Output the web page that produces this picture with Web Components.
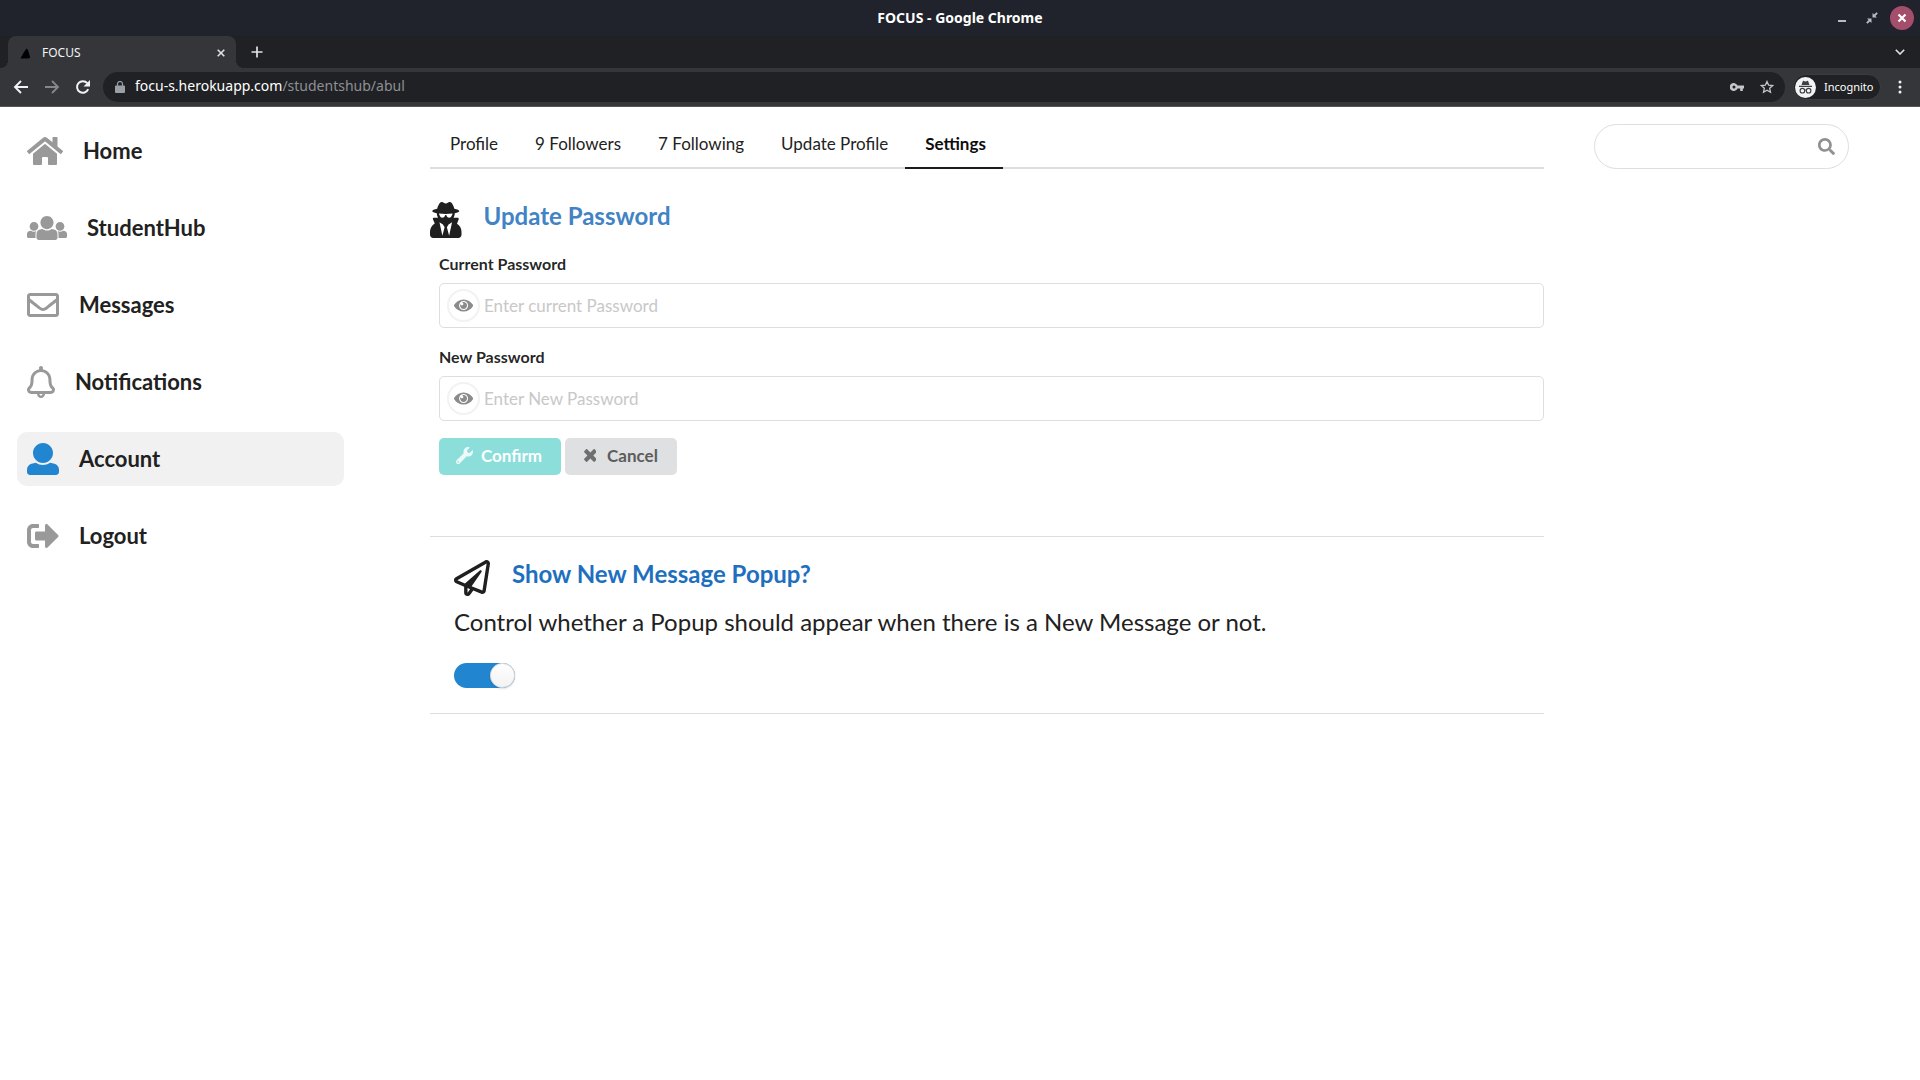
<!DOCTYPE html>
<html lang="en">
<head>
<meta charset="utf-8">
<title>FOCUS</title>
<style>
  html, body { margin: 0; min-height: 100%; background: #fff; }
  body { font-family: Lato, "Liberation Sans", sans-serif; font-size: 17px; line-height: 20px; color: rgba(0,0,0,.87); }
</style>
</head>
<body>
<focus-app></focus-app>

<template id="t-titlebar">
<style>
  :host { display: grid; grid-template-columns: 1fr auto 1fr; align-items: center; height: 36px; padding: 0 6px; background: #20232b; color: #fff; font: bold 14px/20px "Noto Sans", sans-serif; }
  .title { grid-column: 2; }
  .controls { display: flex; justify-content: flex-end; align-items: center; gap: 6px; }
  button { display: grid; place-items: center; width: 24px; height: 24px; padding: 0; border: 0; border-radius: 50%; background: none; color: #b9bbc0; }
  .close { background: #a54e6c; color: #fff; }
  svg { display: block; }
</style>
<span class="title">FOCUS - Google Chrome</span>
<div class="controls">
  <button aria-label="Minimize"><svg width="12" height="12" viewBox="0 0 12 12"><path d="M2 8h8v2H2z" fill="currentColor"/></svg></button>
  <button aria-label="Restore"><svg width="12" height="12" viewBox="0 0 12 12"><path d="M6.500 5.500V1l1.600 1.600L10.500.2l1.300 1.300-2.400 2.400L11 5.500zM5.500 6.500V11L3.900 9.400 1.500 11.800.2 10.500l2.400-2.400L1 6.500z" fill="currentColor"/></svg></button>
  <button class="close" aria-label="Close"><svg width="10" height="10" viewBox="0 0 10 10"><path d="M1.500 1.500l7 7M8.500 1.500l-7 7" stroke="currentColor" stroke-width="2.200"/></svg></button>
</div>
</template>

<template id="t-tabstrip">
<style>
  :host { display: flex; align-items: center; height: 32px; padding: 0 8px; background: #202124; font: 12px/20px "Noto Sans", sans-serif; color: #f1f3f4; }
  .tab { position: relative; display: flex; align-items: center; gap: 10px; box-sizing: border-box; width: 228px; height: 32px; padding: 1px 7px 0 12px; border-radius: 8px 8px 0 0; background: #35363a; }
  .tab::before, .tab::after { content: ""; position: absolute; bottom: 0; width: 8px; height: 8px; }
  .tab::before { right: 100%; background: radial-gradient(circle at 0 0, transparent 8px, #35363a 8px); }
  .tab::after { left: 100%; background: radial-gradient(circle at 100% 0, transparent 8px, #35363a 8px); }
  .name { flex: 1; }
  button { display: grid; place-items: center; width: 16px; height: 16px; padding: 0; border: 0; background: none; color: #dfe1e5; }
  .new { margin-left: 13px; }
  .list { margin-left: auto; margin-right: 4px; }
  svg { display: block; }
</style>
<div class="tab">
  <svg width="12" height="12" viewBox="0 0 12 12"><path d="M.5 11.500Q3 6 6.500 1.500l1.500 1.500 2.200 7.500-1.700 1z" fill="#000"/></svg>
  <span class="name">FOCUS</span>
  <button aria-label="Close tab"><svg width="8" height="8" viewBox="0 0 8 8"><path d="M.7.7l6.600 6.600M7.300.7L.7 7.300" stroke="currentColor" stroke-width="1.600"/></svg></button>
</div>
<button class="new" aria-label="New tab"><svg width="12" height="12" viewBox="0 0 12 12"><path d="M6 .5v11M.5 6h11" stroke="currentColor" stroke-width="1.700"/></svg></button>
<button class="list" aria-label="Search tabs"><svg width="10" height="6" viewBox="0 0 10 6"><path d="M.8.8L5 5 9.200.8" fill="none" stroke="currentColor" stroke-width="1.600"/></svg></button>
</template>

<template id="t-toolbar">
<style>
  :host { display: flex; align-items: center; box-sizing: border-box; height: 39px; padding: 0 12px 0 13px; background: #35363a; border-bottom: 1px solid #55565a; font: 14px/20px "Noto Sans", sans-serif; color: #fff; }
  button { display: grid; place-items: center; width: 16px; height: 16px; padding: 0; border: 0; background: none; color: #f1f3f4; }
  .nav { display: flex; gap: 15px; }
  .back { color: #f1f3f4; } .forward { color: #85868a; }
  .omnibox { display: flex; flex: 1; align-items: center; height: 30px; margin: 0 8px 0 12px; padding: 0 10px 0 12px; border-radius: 15px; background: #202124; }
  .url { flex: 1; margin-left: 10px; padding-bottom: 2px; }
  .path { color: #8d9094; }
  .tools { display: flex; gap: 14px; color: #c4c6ca; }
  .tools button { color: inherit; }
  .incognito { display: flex; align-items: center; gap: 8px; box-sizing: border-box; width: 88px; height: 26px; padding: 0 2px 0 1px; border: 1px solid #3c3d41; border-radius: 13px; background: #202124; font: 11px/20px "Noto Sans", sans-serif; }
  .menu { margin-left: 11px; }
  svg { display: block; }
</style>
<div class="nav">
  <button class="back" aria-label="Back"><svg width="16" height="16" viewBox="0 0 16 16"><path d="M15 8H2.500M8 2L2 8l6 6" fill="none" stroke="currentColor" stroke-width="1.900"/></svg></button>
  <button class="forward" aria-label="Forward"><svg width="16" height="16" viewBox="0 0 16 16"><path d="M1 8h12.500M8 2l6 6-6 6" fill="none" stroke="currentColor" stroke-width="1.900"/></svg></button>
  <button aria-label="Reload"><svg width="16" height="16" viewBox="0 0 16 16"><path d="M13.200 10.200A5.800 5.800 0 1 1 12.300 4.200" fill="none" stroke="currentColor" stroke-width="2"/><path d="M15 1v6.500H8.500z" fill="currentColor"/></svg></button>
</div>
<div class="omnibox">
  <svg width="10" height="12" viewBox="0 0 10 12"><path d="M1 4.500h8a1 1 0 0 1 1 1V11a1 1 0 0 1-1 1H1a1 1 0 0 1-1-1V5.500a1 1 0 0 1 1-1z" fill="#9aa0a6"/><path d="M2.500 5V3a2.500 2.500 0 0 1 5 0v2" fill="none" stroke="#9aa0a6" stroke-width="1.200"/></svg>
  <span class="url">focu-s.herokuapp.com<span class="path">/studentshub/abul</span></span>
  <div class="tools">
    <button aria-label="Passwords"><svg width="14" height="8" viewBox="0 0 14 8"><path fill-rule="evenodd" d="M7.500 2.600H14v2.800h-1.200V8h-2.600V5.400H7.500A4 4 0 1 1 7.500 2.600zM4 2.500a1.500 1.500 0 1 0 0 3 1.500 1.500 0 0 0 0-3z" fill="currentColor"/></svg></button>
    <button aria-label="Bookmark"><svg width="14" height="14" viewBox="0 0 14 14"><path d="M7 1.500l1.650 3.700 4 .4-3 2.700.85 3.950L7 10.200l-3.500 2.050.85-3.950-3-2.700 4-.4z" fill="none" stroke="currentColor" stroke-width="1.300"/></svg></button>
  </div>
</div>
<div class="incognito">
  <svg width="21" height="21" viewBox="0 0 21 21"><circle cx="10.500" cy="10.500" r="10.500" fill="#f1f3f4"/><path d="M6.500 8l1.200-3.600c.2-.5.600-.6 1-.5l1.800.5 1.800-.5c.4-.1.800 0 1 .5L14.500 8zM4 8.800h13v1.100H4z" fill="#3c4043"/><circle cx="7.400" cy="13.700" r="2.300" fill="none" stroke="#3c4043" stroke-width="1.100"/><circle cx="13.600" cy="13.700" r="2.300" fill="none" stroke="#3c4043" stroke-width="1.100"/><path d="M9.500 13.300q1-.6 2 0" fill="none" stroke="#3c4043"/></svg>
  <span>Incognito</span>
</div>
<button class="menu" aria-label="Menu"><svg width="4" height="14" viewBox="0 0 4 14"><g fill="currentColor"><circle cx="2" cy="2" r="1.500"/><circle cx="2" cy="7" r="1.500"/><circle cx="2" cy="12" r="1.500"/></g></svg></button>
</template>

<template id="t-navitem">
<style>
  :host { display: block; }
  a { display: flex; align-items: center; gap: 20px; height: 54px; padding: 0 10px; border-radius: 10px; color: #212121; text-decoration: none; font-size: 22px; font-weight: 700; line-height: 28px; }
  ui-icon { --size: 32px; color: #999; }
  :host([active]) a { background: #f1f1f1; }
  :host([active]) ui-icon { color: #2185d0; }
</style>
<a href="#"><ui-icon></ui-icon><slot></slot></a>
</template>

<template id="t-tab">
<style>
  :host { display: block; }
  a { display: block; padding: 13px 17px 13px 20px; margin-bottom: -2px; border-bottom: 2px solid transparent; color: #222; text-decoration: none; line-height: 20px; }
  :host([active]) a { border-color: #1b1c1d; color: #0d0d0d; font-weight: 700; }
</style>
<a href="#"><slot></slot></a>
</template>

<template id="t-header">
<style>
  :host { display: block; }
  h2 { display: flex; align-items: flex-start; gap: 22px; margin: 0; height: 36px; font-size: 24px; font-weight: 700; line-height: 28px; color: var(--heading, #1e70bf); }
  ui-icon { --size: 36px; color: #1f1f1f; }
</style>
<h2><ui-icon></ui-icon><slot></slot></h2>
</template>

<template id="t-field">
<style>
  :host { display: block; }
  label { display: block; margin-bottom: 9px; font-size: 16px; font-weight: 700; line-height: 20px; }
  .box { display: flex; align-items: center; gap: 4px; box-sizing: border-box; height: 45px; padding: 0 7px; border: 1px solid #dedede; border-radius: 5px; }
  button { display: grid; place-items: center; box-sizing: border-box; width: 33px; height: 33px; padding: 0; border: 2px solid #f2f2f2; border-radius: 50%; background: #fff; color: #8b8b8b; }
  ui-icon { --size: 17px; }
  input { flex: 1; min-width: 0; padding: 0; border: 0; outline: 0; background: none; font: inherit; color: inherit; }
  input::placeholder { color: #c8c8c8; opacity: 1; }
</style>
<label for="field"></label>
<div class="box"><button type="button" aria-label="Show password"><ui-icon name="eye"></ui-icon></button><input id="field" type="password"></div>
</template>

<template id="t-button">
<style>
  :host { display: block; }
  button { display: flex; align-items: center; gap: 7px; height: 37px; padding: 0 19px 2px 15px; border: 0; border-radius: 5px; background: #dfe0e1; color: #5c5c5d; font: inherit; font-weight: 700; line-height: 20px; }
  .icon { display: grid; place-items: center; width: 20px; }
  ui-icon { --size: 17px; opacity: .85; }
  :host([kind=confirm]) button { background: #8bdeda; color: #fff; }
</style>
<button type="button"><span class="icon"><ui-icon></ui-icon></span><slot></slot></button>
</template>

<template id="t-toggle">
<style>
  :host { display: block; height: 25px; }
  input { appearance: none; display: flex; justify-content: flex-end; width: 61px; height: 25px; margin: 0; border-radius: 13px; background: #2185d0; }
  input::before { content: ""; width: 25px; height: 25px; border-radius: 50%; background: linear-gradient(#fff, #f2f2f2); box-shadow: 0 1px 2px rgba(34,36,38,.15), inset 0 0 0 1px rgba(34,36,38,.15); }
  input:not(:checked) { justify-content: flex-start; background: #ddd; }
</style>
<input type="checkbox" role="switch" aria-label="Show new message popup" checked>
</template>

<template id="t-search">
<style>
  :host { display: block; }
  .box { display: flex; align-items: center; box-sizing: border-box; height: 45px; padding: 0 13px 0 17px; border: 1px solid #dedede; border-radius: 23px; }
  input { flex: 1; min-width: 0; padding: 0; border: 0; outline: 0; background: none; font: inherit; }
  button { padding: 0; border: 0; background: none; color: #909090; }
  ui-icon { --size: 17px; }
</style>
<div class="box"><input type="text" aria-label="Search"><button type="button" aria-label="Search"><ui-icon name="search"></ui-icon></button></div>
</template>

<template id="t-app">
<style>
  :host { display: block; }
  .page { display: grid; grid-template-columns: 327px minmax(0, 1fr) 255px; align-items: start; padding: 0 71px 0 17px; }
  nav { display: grid; gap: 23px; padding-top: 17px; }
  main { margin: 14px 50px 0 86px; }
  aside { padding-top: 17px; }
  .tabs { display: flex; border-bottom: 2px solid #dedede; }
  .password { margin-top: 33px; --heading: #4183c4; }
  form { display: grid; gap: 19px; padding: 16px 0 61px 9px; }
  .actions { display: flex; gap: 4px; margin-top: -2px; }
  .popup { padding: 23px 24px 25px; border: solid #dedede; border-width: 1px 0; }
  p { margin: 10px 0 25px; font-size: 24px; line-height: 32px; color: #212121; }
</style>
<header>
  <chrome-titlebar></chrome-titlebar>
  <chrome-tabstrip></chrome-tabstrip>
  <chrome-toolbar></chrome-toolbar>
</header>
<div class="page">
  <nav aria-label="Main">
    <nav-item icon="home">Home</nav-item>
    <nav-item icon="users">StudentHub</nav-item>
    <nav-item icon="mail">Messages</nav-item>
    <nav-item icon="bell">Notifications</nav-item>
    <nav-item icon="user" active>Account</nav-item>
    <nav-item icon="logout">Logout</nav-item>
  </nav>
  <main>
    <div class="tabs">
      <tab-link>Profile</tab-link>
      <tab-link>9 Followers</tab-link>
      <tab-link>7 Following</tab-link>
      <tab-link>Update Profile</tab-link>
      <tab-link active>Settings</tab-link>
    </div>
    <section class="password">
      <icon-header icon="secret">Update Password</icon-header>
      <form>
        <password-field label="Current Password" placeholder="Enter current Password"></password-field>
        <password-field label="New Password" placeholder="Enter New Password"></password-field>
        <div class="actions">
          <icon-button kind="confirm" icon="wrench">Confirm</icon-button>
          <icon-button icon="times">Cancel</icon-button>
        </div>
      </form>
    </section>
    <section class="popup">
      <icon-header icon="plane">Show New Message Popup?</icon-header>
      <p>Control whether a Popup should appear when there is a New Message or not.</p>
      <toggle-switch></toggle-switch>
    </section>
  </main>
  <aside><search-box></search-box></aside>
</div>
</template>

<script>
const ICONS = {
  home: [576, "M280.37 148.26L96 300.11V464a16 16 0 0 0 16 16l112.06-.29a16 16 0 0 0 15.92-16V368a16 16 0 0 1 16-16h64a16 16 0 0 1 16 16v95.64a16 16 0 0 0 16 16.05L464 480a16 16 0 0 0 16-16V300L295.67 148.26a12.19 12.19 0 0 0-15.3 0zM571.6 251.47L488 182.56V44.05a12 12 0 0 0-12-12h-56a12 12 0 0 0-12 12v72.61L318.47 43a48 48 0 0 0-61 0L4.34 251.47a12 12 0 0 0-1.6 16.9l25.5 31A12 12 0 0 0 45.15 301l235.22-193.74a12.19 12.19 0 0 1 15.3 0L530.9 301a12 12 0 0 0 16.9-1.6l25.5-31a12 12 0 0 0-1.7-16.93z"],
  users: [640, "M320 64c57.99 0 105 47.01 105 105s-47.01 105-105 105-105-47.01-105-105S262.01 64 320 64zm113.463 217.366l-39.982-9.996c-49.168 35.365-108.766 27.473-146.961 0l-39.982 9.996C174.485 289.379 152 318.177 152 351.216V412c0 19.882 16.118 36 36 36h264c19.882 0 36-16.118 36-36v-60.784c0-33.039-22.485-61.837-54.537-69.85zM528 300c38.66 0 70-31.34 70-70s-31.34-70-70-70-70 31.34-70 70 31.34 70 70 70zm-416 0c38.66 0 70-31.34 70-70s-31.34-70-70-70-70 31.34-70 70 31.34 70 70 70zm24 112v-60.784c0-16.551 4.593-32.204 12.703-45.599-29.988 14.72-63.336 8.708-85.69-7.37l-26.655 6.664C14.99 310.252 0 329.452 0 351.477V392c0 13.255 10.745 24 24 24h112.169a52.417 52.417 0 0 1-.169-4zm467.642-107.09l-26.655-6.664c-27.925 20.086-60.89 19.233-85.786 7.218C499.369 318.893 504 334.601 504 351.216V412c0 1.347-.068 2.678-.169 4H616c13.255 0 24-10.745 24-24v-40.523c0-22.025-14.99-41.225-36.358-46.567z"],
  mail: [512, "M464 64H48C21.49 64 0 85.49 0 112v288c0 26.51 21.49 48 48 48h416c26.51 0 48-21.49 48-48V112c0-26.51-21.49-48-48-48zm0 48v40.805c-22.422 18.259-58.168 46.651-134.587 106.49-16.841 13.247-50.201 45.072-73.413 44.701-23.208.375-56.579-31.459-73.413-44.701C106.18 199.465 70.425 171.067 48 152.805V112h416zM48 400V214.398c22.914 18.251 55.409 43.862 104.938 82.646 21.857 17.205 60.134 55.186 103.062 54.955 42.717.231 80.509-37.199 103.053-54.947 49.528-38.783 82.032-64.401 104.947-82.653V400H48z"],
  bell: [448, "M425.403 330.939c-16.989-16.785-34.546-34.143-34.546-116.083 0-83.026-60.958-152.074-140.467-164.762A31.843 31.843 0 0 0 256 32c0-17.673-14.327-32-32-32s-32 14.327-32 32a31.848 31.848 0 0 0 5.609 18.095C118.101 62.783 57.143 131.831 57.143 214.857c0 81.933-17.551 99.292-34.543 116.078C-25.496 378.441 9.726 448 66.919 448H160c0 35.346 28.654 64 64 64 35.346 0 64-28.654 64-64h93.08c57.19 0 92.415-69.583 44.323-117.061zM224 472c-13.234 0-24-10.767-24-24h48c0 13.234-10.766 24-24 24zm157.092-72H66.9c-16.762 0-25.135-20.39-13.334-32.191 28.585-28.585 51.577-55.724 51.577-152.952C105.143 149.319 158.462 96 224 96s118.857 53.319 118.857 118.857c0 97.65 23.221 124.574 51.568 152.952C406.278 379.661 397.783 400 381.092 400z"],
  user: [512, "M256 0c88.366 0 160 71.634 160 160s-71.634 160-160 160S96 248.366 96 160 167.634 0 256 0zm183.283 333.821l-71.313-17.828c-74.923 53.89-165.738 41.864-223.94 0l-71.313 17.828C29.981 344.505 0 382.903 0 426.955V464c0 26.51 21.49 48 48 48h416c26.51 0 48-21.49 48-48v-37.045c0-44.052-29.981-82.45-72.717-93.134z"],
  logout: [512, "M497 273L329 441c-15 15-41 4.500-41-17v-96H152c-13.300 0-24-10.700-24-24v-96c0-13.300 10.700-24 24-24h136V88c0-21.400 25.900-32 41-17l168 168c9.300 9.400 9.300 24.600 0 34zM192 436v-40c0-6.600-5.400-12-12-12H96c-17.700 0-32-14.300-32-32V160c0-17.700 14.300-32 32-32h84c6.600 0 12-5.400 12-12V76c0-6.600-5.400-12-12-12H96c-53 0-96 43-96 96v192c0 53 43 96 96 96h84c6.600 0 12-5.400 12-12z"],
  search: [512, "M505 442.700L405.300 343c-4.500-4.500-10.600-7-17-7H372c27.600-35.300 44-79.700 44-128C416 93.100 322.900 0 208 0S0 93.100 0 208s93.100 208 208 208c48.300 0 92.700-16.400 128-44v16.300c0 6.400 2.500 12.500 7 17l99.700 99.700c9.400 9.400 24.600 9.400 33.900 0l28.300-28.300c9.400-9.400 9.400-24.600.1-34zM208 336c-70.700 0-128-57.200-128-128 0-70.700 57.200-128 128-128 70.700 0 128 57.200 128 128 0 70.700-57.200 128-128 128z"],
  wrench: [512, "M507.73 109.1c-2.24-9.03-13.54-12.09-20.12-5.51l-74.36 74.36-67.88-11.31-11.31-67.88 74.36-74.36c6.62-6.62 3.43-17.9-5.66-20.16-47.38-11.74-99.55.91-136.58 37.93-39.64 39.64-50.55 97.1-34.05 147.2L18.74 402.76c-24.99 24.99-24.99 65.51 0 90.5 24.99 24.99 65.51 24.99 90.5 0l213.21-213.21c50.12 16.71 107.47 5.68 147.37-34.22 37.07-37.07 49.7-89.32 37.91-136.73zM64 472c-13.25 0-24-10.75-24-24 0-13.26 10.75-24 24-24s24 10.74 24 24c0 13.25-10.75 24-24 24z"],
  times: [384, "M323.1 441l53.9-53.9c9.4-9.4 9.4-24.5 0-33.9L279.8 256l97.2-97.2c9.4-9.4 9.4-24.5 0-33.9L323.1 71c-9.4-9.4-24.5-9.4-33.9 0L192 168.2 94.8 71c-9.4-9.4-24.5-9.4-33.9 0L7 124.9c-9.4 9.4-9.4 24.5 0 33.9l97.2 97.2L7 353.2c-9.4 9.4-9.4 24.5 0 33.9L60.9 441c9.4 9.4 24.5 9.4 33.9 0l97.2-97.2 97.2 97.2c9.3 9.3 24.5 9.3 33.9 0z"],
  eye: [576, "M569.354 231.631C512.969 135.949 407.81 72 288 72 168.14 72 63.004 135.994 6.646 231.631a47.999 47.999 0 0 0 0 48.739C63.031 376.051 168.19 440 288 440c119.86 0 224.996-63.994 281.354-159.631a47.997 47.997 0 0 0 0-48.738zM288 392c-75.162 0-136-60.827-136-136 0-75.162 60.826-136 136-136 75.162 0 136 60.826 136 136 0 75.162-60.826 136-136 136zm104-136c0 57.438-46.562 104-104 104s-104-46.562-104-104c0-17.708 4.431-34.379 12.236-48.973l-.001.032c0 23.651 19.173 42.823 42.824 42.823s42.824-19.173 42.824-42.823c0-23.651-19.173-42.824-42.824-42.824l-.032.001C253.621 156.431 270.292 152 288 152c57.438 0 104 46.562 104 104z"],
  plane: [512, "M440 6.500L24 246.400c-34.400 19.900-31.100 70.800 5.700 85.900L144 379.600V464c0 46.400 59.200 65.500 86.600 28.600l43.800-59.100 111.900 46.200c5.900 2.400 12.100 3.600 18.300 3.600 8.200 0 16.300-2.100 23.600-6.200 12.800-7.200 21.600-20 23.900-34.500l59.400-387.200c6.100-40.100-36.900-68.800-71.500-48.900zM192 464v-64.600l36.600 15.100L192 464zm212.600-28.700l-153.800-63.500L391 169.500c10.700-15.500-9.500-33.500-23.700-21.200L155.800 332.600 48 288 464 48l-59.400 387.300z"],
  secret: [448, "M383.900 308.300l23.900-62.600c4-10.500-3.700-21.700-15-21.700h-58.500c11-18.900 17.800-40.600 17.800-64v-.3c39.200-7.800 64-19.100 64-31.700 0-13.300-27.300-25.100-70.100-33-9.200-32.800-27-65.800-40.600-82.800-9.500-11.900-25.900-15.600-39.500-8.800l-27.600 13.800c-9 4.500-19.600 4.500-28.600 0L182.100 3.400c-13.600-6.800-30-3.100-39.500 8.800-13.500 17-31.400 50-40.600 82.800-42.700 7.900-70 19.700-70 33 0 12.600 24.800 23.900 64 31.700v.3c0 23.400 6.800 45.100 17.800 64H56.300c-11.500 0-19.200 11.700-14.700 22.300l25.800 60.200C27.300 329.800 0 372.700 0 422.400v44.800C0 491.900 20.100 512 44.800 512h358.400c24.700 0 44.800-20.100 44.800-44.800v-44.800c0-48.400-25.800-90.400-64.100-114.100zM176 480l-41.600-192 49.600 32 24 40-32 120zm96 0l-32-120 24-40 49.600-32L272 480zm41.700-298.500c-3.900 11.900-7 24.600-16.500 33.400-10.100 9.300-48 22.400-64-25-2.800-8.400-15.400-8.400-18.300 0-17 50.200-56 32.400-64 25-9.500-8.800-12.700-21.500-16.500-33.400-.8-2.500-6.300-5.700-6.300-5.800v-10.800c28.300 3.600 61 5.800 96 5.800s67.700-2.100 96-5.800v10.800c-.1.100-5.600 3.200-6.400 5.800z"]
};

// Base class: clones the element's template into an open shadow root.
class Base extends HTMLElement {
  connectedCallback() {
    if (this.shadowRoot) return;
    const root = this.attachShadow({ mode: "open" });
    root.append(document.getElementById(this.constructor.template).content.cloneNode(true));
    const icon = this.getAttribute("icon");
    if (icon) root.querySelector("ui-icon").setAttribute("name", icon);
    this.setup(root);
  }
  setup() {}
}

class UiIcon extends HTMLElement {
  static observedAttributes = ["name"];
  constructor() { super(); this.attachShadow({ mode: "open" }); }
  attributeChangedCallback(_, __, name) {
    const [width, path] = ICONS[name];
    this.shadowRoot.innerHTML = `<style>:host{display:block;flex:none}svg{display:block;height:var(--size);width:auto;fill:currentColor}</style><svg viewBox="0 0 ${width} 512" aria-hidden="true"><path d="${path}"/></svg>`;
  }
}
customElements.define("ui-icon", UiIcon);

class PasswordField extends Base {
  static template = "t-field";
  setup(root) {
    root.querySelector("label").textContent = this.getAttribute("label");
    const input = root.querySelector("input");
    input.placeholder = this.getAttribute("placeholder");
    root.querySelector("button").addEventListener("click", () => {
      input.type = input.type === "password" ? "text" : "password";
    });
  }
}
customElements.define("password-field", PasswordField);

const plain = {
  "chrome-titlebar": "t-titlebar", "chrome-tabstrip": "t-tabstrip", "chrome-toolbar": "t-toolbar",
  "nav-item": "t-navitem", "tab-link": "t-tab", "icon-header": "t-header",
  "icon-button": "t-button", "toggle-switch": "t-toggle", "search-box": "t-search", "focus-app": "t-app"
};
for (const [tag, template] of Object.entries(plain)) {
  customElements.define(tag, class extends Base { static template = template; });
}
</script>
</body>
</html>
